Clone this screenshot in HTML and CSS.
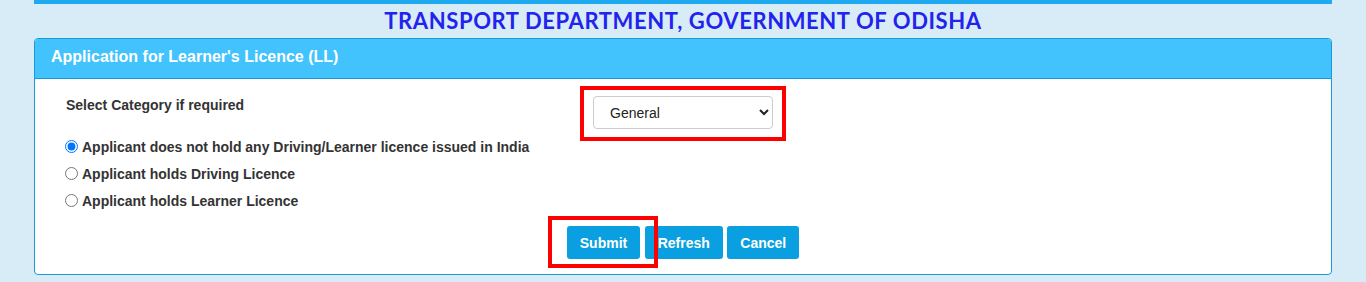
FILE: index.html
```html
<!DOCTYPE html>
<html lang="en">
<head>
  <meta charset="UTF-8">
  <meta name="viewport" content="width=device-width, initial-scale=1">
  <title>Learner's Licence</title>

  <link rel="stylesheet" href="styles.css">
</head>

<body>

  <div class="page">
    <div class="top-bar"></div>
    <div class="site-title">TRANSPORT DEPARTMENT, GOVERNMENT OF ODISHA</div>

    <div class="panel">
      <div class="panel-heading">Application for Learner's Licence (LL)</div>

      <div class="panel-body">
        <div class="category-row">
          <label for="category">Select Category if required</label>
          <div>
            <span class="select-mark">
              <select id="category">
                <option>General</option>
                <option>Defence</option>
                <option>Govt. Employee</option>
              </select>
            </span>
          </div>
        </div>

        <ul class="options">
          <li><input type="radio" name="holds" id="opt1" checked><label for="opt1">Applicant does not hold any Driving/Learner licence issued in India</label></li>
          <li><input type="radio" name="holds" id="opt2"><label for="opt2">Applicant holds Driving Licence</label></li>
          <li><input type="radio" name="holds" id="opt3"><label for="opt3">Applicant holds Learner Licence</label></li>
        </ul>

        <div class="actions">
          <button class="btn btn-marked">Submit</button>
          <button class="btn">Refresh</button>
          <button class="btn">Cancel</button>
        </div>
      </div>
    </div>
  </div>

</body>
</html>
```

FILE: styles.css
```css
body {
  font-family: 'Liberation Sans', Arial, sans-serif;
  margin: 0;
  padding: 0;
  background: #d7ecf6;
  color: #333;
}

.page {
  margin: 0 34px;
}

.top-bar {
  height: 4px;
  background: #1fa9f0;
}

.site-title {
  height: 34px;
  line-height: 34px;
  text-align: center;
  font-family: Lato, 'DejaVu Sans', sans-serif;
  font-weight: bold;
  font-size: 22px;
  letter-spacing: 0.6px;
  color: #2323ee;
}

.panel {
  background: white;
  border: 1px solid #1a9ad6;
  border-radius: 4px;
}

.panel-heading {
  background: #43c3fd;
  border-bottom: 1px solid #1a9ad6;
  border-radius: 3px 3px 0 0;
  height: 39px;
  line-height: 36px;
  padding-left: 16px;
  color: white;
  font-weight: bold;
  font-size: 16px;
}

.panel-body {
  padding: 17px 30px 15px 30px;
}

.category-row {
  display: grid;
  grid-template-columns: 528px 1fr;
  align-items: start;
}

.category-row label {
  font-size: 14px;
  font-weight: bold;
  line-height: 18px;
  padding-left: 1px;
}

.select-mark {
  position: relative;
  display: inline-block;
}

.select-mark::after,
.btn-marked::after {
  content: "";
  position: absolute;
  border: 4px solid #ff0000;
  pointer-events: none;
}

.select-mark::after {
  top: -10px;
  bottom: -12px;
  left: -13px;
  right: -13px;
}

select {
  display: block;
  width: 180px;
  height: 33px;
  border: 1px solid #ccc;
  border-radius: 4px;
  background: white;
  padding-left: 12px;
  font-family: 'Liberation Sans', Arial, sans-serif;
  font-size: 14px;
  color: #222;
}

.options {
  list-style: none;
  margin: 4px 0 0 0;
  padding: 0;
}

.options li {
  display: flex;
  align-items: center;
  height: 27px;
}

.options input {
  margin: 0 4px 0 0;
  width: 13px;
  height: 13px;
}

.options label {
  font-size: 14px;
  font-weight: bold;
}

.actions {
  margin-top: 12px;
  text-align: center;
}

.btn {
  background: #099fe0;
  color: white;
  border: none;
  border-radius: 3px;
  height: 33px;
  padding: 0 13px;
  font-family: 'Liberation Sans', Arial, sans-serif;
  font-weight: bold;
  font-size: 14px;
  cursor: pointer;
}

.btn-marked {
  position: relative;
}

.btn-marked::after {
  top: -10px;
  bottom: -9px;
  left: -19px;
  right: -18px;
}
```
